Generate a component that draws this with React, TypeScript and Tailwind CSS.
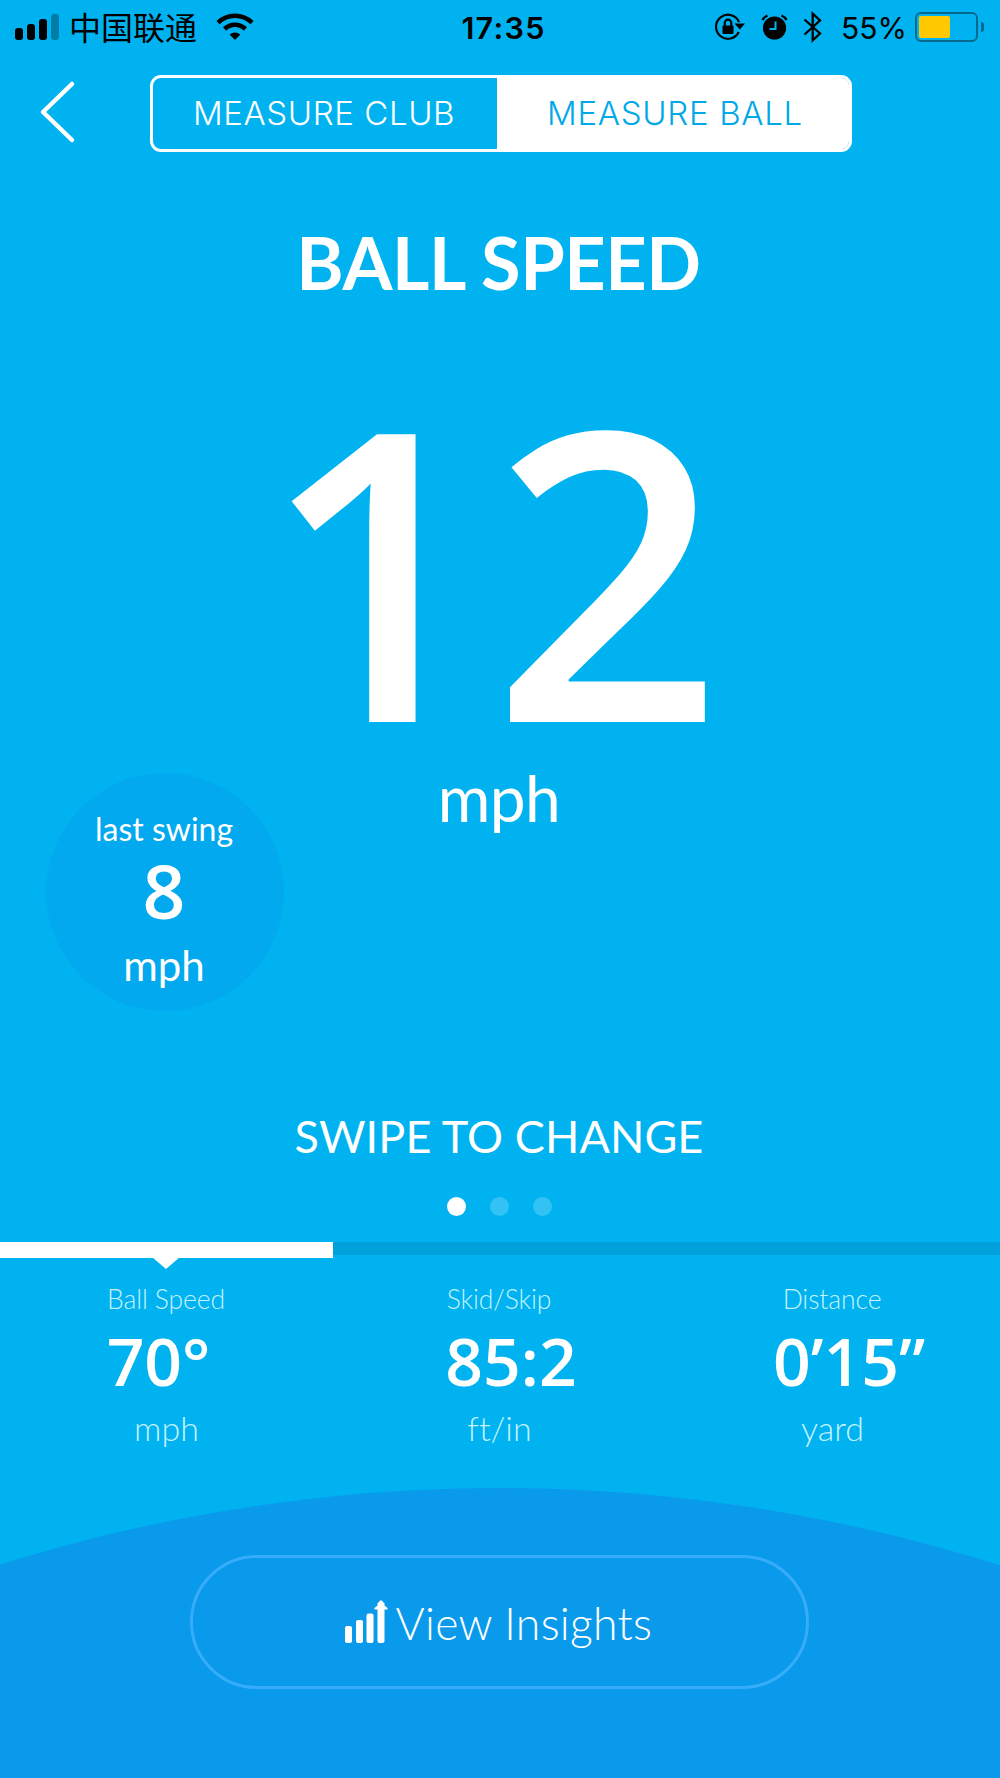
import React from 'react'
import { clsx } from 'clsx'

const signal = ['h-3', 'h-4', 'h-[21px]', 'h-[26px] opacity-30']

const stats = [
  { label: 'Ball Speed', value: '70°', unit: 'mph', shift: 'pr-[16px]' },
  { label: 'Skid/Skip', value: '85:2', unit: 'ft/in', shift: 'pl-[23px]' },
  { label: 'Distance', value: '0’15”', unit: 'yard', shift: 'pl-[33px]' },
]

const WifiIcon = () => (
  <svg width="38" height="28" viewBox="0 0 38 28" fill="none" stroke="#000" strokeWidth="4.6">
    <path d="M2 9.6a24.5 24.5 0 0 1 34 0" />
    <path d="M8.6 16a15 15 0 0 1 20.8 0" />
    <path d="M19 27l-5.4-5.4a8 8 0 0 1 10.8 0z" fill="#000" stroke="none" />
  </svg>
)

const RotationLockIcon = () => (
  <svg width="32" height="30" viewBox="0 0 32 30" fill="none" stroke="#000" strokeWidth="2.2">
    <path d="M24.8 20a12 12 0 1 1 .3-9.8" />
    <path d="M20.5 11.5h10.5l-5.2 6z" fill="#000" stroke="none" />
    <rect x="8.5" y="13.5" width="11" height="8.5" rx="1" fill="#000" stroke="none" />
    <path d="M10.7 14v-3a3.3 3.3 0 0 1 6.6 0v3" />
  </svg>
)

const AlarmIcon = () => (
  <svg width="27" height="26" viewBox="0 0 27 26" fill="none">
    <circle cx="13.5" cy="14" r="11.6" fill="#000" />
    <path d="M1.5 6a10 10 0 0 1 5-4.5M25.5 6a10 10 0 0 0-5-4.5" stroke="#000" strokeWidth="2.4" />
    <path d="M14.5 7.5v7.5H8.5" stroke="#00b3f0" strokeWidth="2" />
  </svg>
)

const BluetoothIcon = () => (
  <svg width="20" height="32" viewBox="0 0 20 32" fill="none" stroke="#000" strokeWidth="2.3">
    <path d="M1.5 8.5L17 22.5l-7.3 6.8V2.7L17 9.5L1.5 23.5" />
  </svg>
)

const InsightsIcon = () => (
  <svg width="43" height="43" viewBox="0 0 43 43" fill="#fff">
    <rect x="0" y="26" width="7" height="17" rx="2" />
    <rect x="11" y="20" width="7" height="23" rx="2" />
    <rect x="21.5" y="13.5" width="7" height="29.5" rx="2" />
    <path d="M32.5 41V9.5h-2.2a1 1 0 0 1-.8-1.6L32.5 5.5V3.5q0-1 1-1l1.2-1.5q1.3-1.5 2.6 0l1.2 1.5q1 0 1 1v2L42.5 7.9a1 1 0 0 1-.8 1.6H39.5V41q0 2-2 2h-3q-2 0-2-2z" />
  </svg>
)

const StatusBar = () => (
  <div className="flex h-[54px] items-center pr-4 pl-[15px] text-black">
    <div className="flex flex-1 items-center">
      <div className="flex h-[26px] items-end gap-1">
        {signal.map((bar) => (
          <div key={bar} className={clsx('w-2 rounded-[3px] bg-black', bar)} />
        ))}
      </div>
      <span className="ml-[10px] pb-0.5 font-['Noto_Sans_CJK_SC',sans-serif] text-[32px] leading-none">中国联通</span>
      <div className="ml-[19px]"><WifiIcon /></div>
    </div>
    <span className="pt-0.5 pl-2 font-[Inter,sans-serif] text-[30.5px] leading-none font-semibold tracking-[1.3px]">17:35</span>
    <div className="flex flex-1 items-center justify-end">
      <RotationLockIcon />
      <div className="ml-[15px]"><AlarmIcon /></div>
      <div className="ml-[15px]"><BluetoothIcon /></div>
      <span className="ml-[18px] pt-0.5 font-[Inter,sans-serif] text-[30px] leading-none">55%</span>
      <div className="ml-2 h-[30px] w-[63px] rounded-[6px] border-2 border-[#08698f] p-0.5">
        <div className="h-full w-[31px] rounded-[2px] bg-[#ffc800]" />
      </div>
      <div className="ml-[3px] h-[10px] w-[3px] rounded-r-full bg-[#08698f]" />
    </div>
  </div>
)

const TopNav = () => (
  <div className="flex h-[119px] pt-[21px] pl-[39px]">
    <svg className="mt-[5px]" width="37" height="64" viewBox="0 0 37 64" fill="none" stroke="#fff" strokeWidth="4.5" strokeLinecap="round" strokeLinejoin="round">
      <path d="M33 4L4 32l29 28" />
    </svg>
    <div className="ml-[74px] flex h-[77px] w-[702px] overflow-hidden rounded-[11px] border-[3px] border-white font-[Inter,sans-serif] text-[33px]">
      <button className="w-[344px] pt-px pr-[2px] font-[360] tracking-[0.6px] whitespace-nowrap text-white">MEASURE CLUB</button>
      <button className="flex-1 bg-white pt-px pl-[4px] font-[360] tracking-[0.7px] whitespace-nowrap text-[#00a8e6]">MEASURE BALL</button>
    </div>
  </div>
)

const LastSwing = () => (
  <div className="ml-[46px] flex h-[238px] w-[238px] flex-col items-center rounded-full bg-[#02a9ee] pt-[40px] pr-[2px] leading-none">
    <span className="text-[32px] leading-none">last swing</span>
    <span className="mt-[8px] font-['Open_Sans',sans-serif] text-[75px] leading-none font-semibold">8</span>
    <span className="mt-[16px] text-[42px] leading-none">mph</span>
  </div>
)

const Stats = () => (
  <div>
    <div className="h-[13px] bg-[#00a0da]">
      <div className="flex h-4 w-[333px] bg-white">
        <svg className="mt-[15px] ml-[152px] shrink-0" width="28" height="12" viewBox="0 0 28 12" fill="#fff">
          <path d="M0 0h28L14 12z" />
        </svg>
      </div>
    </div>
    <div className="grid w-[999px] grid-cols-3 pt-[31px] text-center">
      {stats.map((stat) => (
        <div key={stat.label} className="flex flex-col">
          <span className="pr-px text-[26.5px] leading-none font-light tracking-[-0.1px] text-[#c4f2ff]">{stat.label}</span>
          <span className={clsx("mt-[14px] font-['Open_Sans',sans-serif] text-[66px] leading-none font-semibold", stat.shift)}>{stat.value}</span>
          <span className="mt-[18px] text-[34px] leading-none font-light text-[#c4f2ff] [font-variant-ligatures:none]">{stat.unit}</span>
        </div>
      ))}
    </div>
  </div>
)

const App = () => {
  return (
    <main className="flex h-[1778px] w-[1000px] flex-col overflow-hidden bg-[#00b3f0] font-[Lato,sans-serif] text-white">
      <StatusBar />
      <TopNav />

      <div className="flex h-[600px] flex-col items-center pt-[53px]">
        <h1 className="pr-[3px] text-[72px] leading-none font-bold tracking-[-0.4px]">BALL SPEED</h1>
        <span className="mt-[66px] pr-[16px] font-['Open_Sans',sans-serif] text-[403px] leading-none font-semibold">12</span>
        <span className="-mt-px pr-[2px] text-[64px] leading-none tracking-[-0.6px]">mph</span>
      </div>

      <LastSwing />

      <div className="mt-[103px] flex flex-col items-center pr-[2px]">
        <span className="text-[45px] leading-none tracking-[0.1px]">SWIPE TO CHANGE</span>
        <div className="mt-[38px] mb-[26px] flex gap-6">
          <div className="size-[19px] rounded-full bg-white" />
          <div className="size-[19px] rounded-full bg-[#33c2f4]" />
          <div className="size-[19px] rounded-full bg-[#33c2f4]" />
        </div>
      </div>

      <Stats />

      <div className="mt-[43px] flex-1 overflow-hidden">
        <div className="-ml-[1163px] flex h-[3324px] w-[3324px] justify-center rounded-full bg-[#0a9aeb] pt-[67px]">
          <button className="flex h-[134px] w-[619px] items-center rounded-full border-[3px] border-[#37acfa] pl-[152px]">
            <InsightsIcon />
            <span className="ml-2 pt-[4px] text-[44.5px] leading-none font-light tracking-[0.3px]">View Insights</span>
          </button>
        </div>
      </div>
    </main>
  )
}

export default App
